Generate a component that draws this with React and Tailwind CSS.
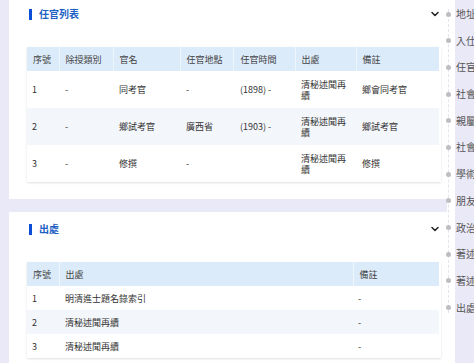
import { ChevronDown } from 'lucide-react';

const offices = [
  { no: '1', kind: '-', title: '同考官', place: '-', time: '(1898) -', src: '清秘述聞再續', note: '鄉會同考官' },
  { no: '2', kind: '-', title: '鄉試考官', place: '廣西省', time: '(1903) -', src: '清秘述聞再續', note: '鄉試考官' },
  { no: '3', kind: '-', title: '修撰', place: '-', time: '', src: '清秘述聞再續', note: '修撰' },
];

const sources = [
  { no: '1', src: '明清進士題名錄索引', note: '-' },
  { no: '2', src: '清秘述聞再續', note: '-' },
  { no: '3', src: '清秘述聞再續', note: '-' },
];

const navItems = ['地址', '入仕', '任官', '社會', '親屬', '社會', '學術', '朋友', '政治', '著述', '著述', '出處'];

const SectionTitle = ({ children }) => (
  <div className="flex items-center justify-between pl-[20px] pr-0 h-[10px]">
    <div className="flex items-center gap-[7px]">
      <span className="block w-[3px] h-[11px] bg-[#0b4fd6]" />
      <span className="text-[10px] leading-[10px] font-bold text-[#1f5fc4]">{children}</span>
    </div>
    <ChevronDown size={12} strokeWidth={3} className="text-[#222]" />
  </div>
);

const Th = ({ children, first, className = '' }) => (
  <th className={`h-[24px] pl-[6px] text-left font-normal ${first ? 'pl-[5px]' : 'border-l border-[#eef6fd]'} ${className}`}>
    {children}
  </th>
);

const App = () => {
  return (
    <div
      className="flex w-[474px] h-[363px] overflow-hidden bg-[#eae9f8] pl-[9px] text-[#333]"
      style={{ fontFamily: '"Noto Sans CJK TC", "Noto Sans", sans-serif' }}
    >
      {/* cards */}
      <div className="flex flex-col w-[438px] shrink-0">
        <div className="bg-white -mt-[3px] pt-[12px] pb-[17px] pr-[6px]">
          <SectionTitle>任官列表</SectionTitle>
          <div className="mt-[28px] ml-[18px] shadow-[0_1px_2px_rgba(0,0,0,0.12)]">
            <table className="w-[412px] table-fixed border-collapse text-[9px] leading-[11px]">
              <colgroup>
                <col className="w-[32px]" />
                <col className="w-[54px]" />
                <col className="w-[67px]" />
                <col className="w-[53px]" />
                <col className="w-[62px]" />
                <col className="w-[61px]" />
                <col />
              </colgroup>
              <thead className="bg-[#dcebf9] text-[#444]">
                <tr>
                  <Th first>序號</Th>
                  <Th>除授類別</Th>
                  <Th>官名</Th>
                  <Th>任官地點</Th>
                  <Th className="pl-[7px]">任官時間</Th>
                  <Th>出處</Th>
                  <Th>備註</Th>
                </tr>
              </thead>
              <tbody>
                {offices.map((r, i) => (
                  <tr key={r.no} className={`h-[37px] ${i % 2 === 1 ? 'bg-[#f3f6fb]' : 'bg-white'}`}>
                    <td className="pl-[5px]">{r.no}</td>
                    <td className="pl-[6px]">{r.kind}</td>
                    <td className="pl-[6px]">{r.title}</td>
                    <td className="pl-[6px]">{r.place}</td>
                    <td className="pl-[7px]">{r.time}</td>
                    <td className="pl-[6px] pr-[10px] break-all">{r.src}</td>
                    <td className="pl-[6px]">{r.note}</td>
                  </tr>
                ))}
              </tbody>
            </table>
          </div>
        </div>

        <div className="bg-white mt-[13px] pt-[12px] pr-[6px] flex-1">
          <SectionTitle>出處</SectionTitle>
          <div className="mt-[28px] ml-[18px] shadow-[0_1px_2px_rgba(0,0,0,0.12)]">
            <table className="w-[412px] table-fixed border-collapse text-[9px] leading-[11px]">
              <colgroup>
                <col className="w-[32px]" />
                <col className="w-[294px]" />
                <col />
              </colgroup>
              <thead className="bg-[#dcebf9] text-[#444]">
                <tr>
                  <Th first>序號</Th>
                  <Th>出處</Th>
                  <Th className="pl-[5px]">備註</Th>
                </tr>
              </thead>
              <tbody>
                {sources.map((r, i) => (
                  <tr key={r.no} className={`h-[24px] ${i % 2 === 1 ? 'bg-[#f3f6fb]' : 'bg-white'}`}>
                    <td className="pl-[5px]">{r.no}</td>
                    <td className="pl-[6px]">{r.src}</td>
                    <td className="pl-[5px]">{r.note}</td>
                  </tr>
                ))}
              </tbody>
            </table>
          </div>
        </div>
      </div>

      {/* side nav */}
      <div className="w-[8px] shrink-0 bg-white">
        <div className="flex flex-col mt-[9px] ml-[1px] gap-[16.7px] border-l border-dashed border-[#e4e4ea]">
          {navItems.map((item, i) => (
            <div key={i} className="flex items-center gap-[5px] h-[10px] ml-[-3px] whitespace-nowrap">
              <span className="block shrink-0 w-[5px] h-[5px] rounded-full bg-[#bdbdc4]" />
              <span className="text-[10px] leading-[10px] text-[#555]">{item}</span>
            </div>
          ))}
        </div>
      </div>
    </div>
  );
};

export default App;
